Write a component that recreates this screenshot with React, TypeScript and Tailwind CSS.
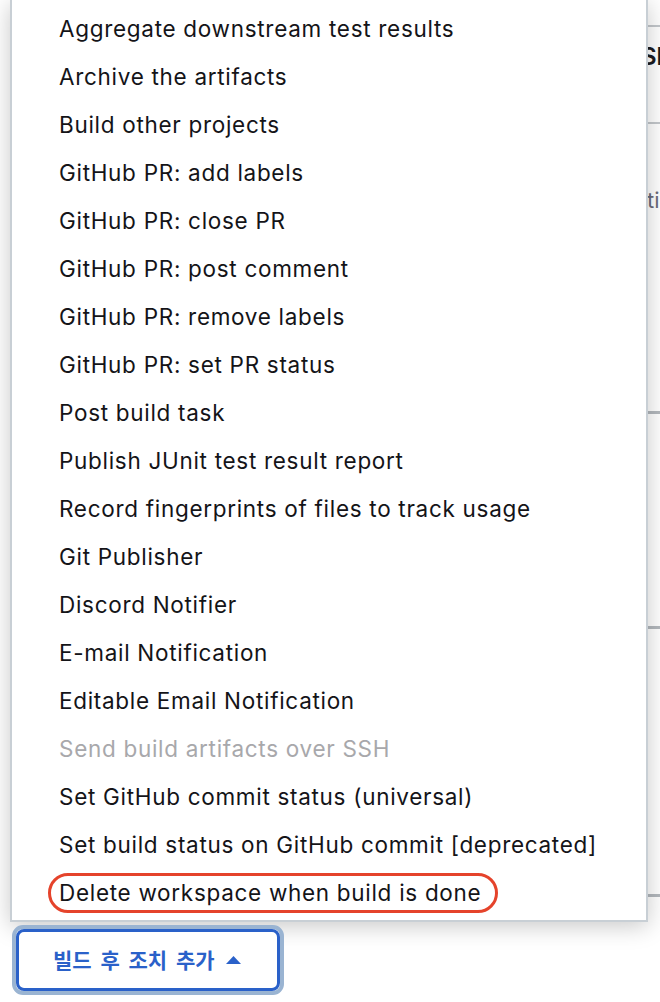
const items = [
  "Aggregate downstream test results",
  "Archive the artifacts",
  "Build other projects",
  "GitHub PR: add labels",
  "GitHub PR: close PR",
  "GitHub PR: post comment",
  "GitHub PR: remove labels",
  "GitHub PR: set PR status",
  "Post build task",
  "Publish JUnit test result report",
  "Record fingerprints of files to track usage",
  "Git Publisher",
  "Discord Notifier",
  "E-mail Notification",
  "Editable Email Notification",
  "Send build artifacts over SSH",
  "Set GitHub commit status (universal)",
  "Set build status on GitHub commit [deprecated]",
  "Delete workspace when build is done",
];

const font = { fontFamily: "Inter, 'Noto Sans', sans-serif" };

const Background = () => (
  <div className="flex flex-col pl-[600px] w-[660px] h-[1002px] bg-white">
    <div className="h-[25px] shrink-0" />
    <div className="border-t-2 border-[#c3c7cb]" />
    <div className="h-[95px] pl-[41px] pt-[12px] text-[24px] font-semibold text-[#1b1b1f] whitespace-nowrap" style={font}>
      Slack
    </div>
    <div className="border-t-2 border-[#c3c7cb]" />
    <div className="h-[287px] pl-[47px] pt-[60px] text-[22px] text-[#6b6b7a] whitespace-nowrap" style={font}>
      ti
    </div>
    <div className="border-t-[3px] border-dashed border-[#b3b8bd] ml-[48px]" />
    <div className="h-[212px]" />
    <div className="border-t-[3px] border-dashed border-[#b3b8bd] ml-[48px]" />
    <div className="h-[265px]" />
    <div className="border-t-[3px] border-dashed border-[#b3b8bd] ml-[48px]" />
  </div>
);

export default function App() {
  return (
    <div className="relative w-[660px] h-[1002px] overflow-hidden bg-white">
      <Background />
      <div
        className="absolute left-[10px] top-0 w-[638px] h-[922px] bg-white border-x-2 border-b-2 border-[#c8cfd5] shadow-[0_4px_22px_rgba(0,0,0,0.22)] pt-[5px] flex flex-col"
        style={font}
      >
        {items.map((t, i) => {
          const last = i === items.length - 1;
          const disabled = t === "Send build artifacts over SSH";
          return (
            <div key={t} className="h-[48px] flex items-center pl-[36px] shrink-0">
              <span
                className={
                  "inline-flex items-center h-[40px] pl-[8px] pr-[14px] rounded-full border-[3px] text-[22.5px] tracking-[0.7px] whitespace-nowrap " +
                  (last ? "border-[#e5432b] " : "border-transparent ") +
                  (disabled ? "text-[#a8a8ab]" : "text-[#141418]")
                }
              >
                {t}
              </span>
            </div>
          );
        })}
      </div>
      <div className="absolute left-[12px] top-[925px] rounded-[11px] border-[4px] border-[#9ab4d2] bg-white">
        <button
          className="flex items-center gap-[11px] h-[62px] pl-[34px] pr-[36px] rounded-[8px] border-[3px] border-[#2a61c9] text-[#2a61c9] text-[21px] font-bold [word-spacing:4px]"
          style={{ fontFamily: "'Noto Sans CJK KR', 'Noto Sans', sans-serif" }}
        >
          빌드 후 조치 추가
          <svg width="15" height="8" viewBox="0 0 15 8">
            <path d="M0 8 L7.5 0 L15 8 Z" fill="#2a61c9" />
          </svg>
        </button>
      </div>
    </div>
  );
}
